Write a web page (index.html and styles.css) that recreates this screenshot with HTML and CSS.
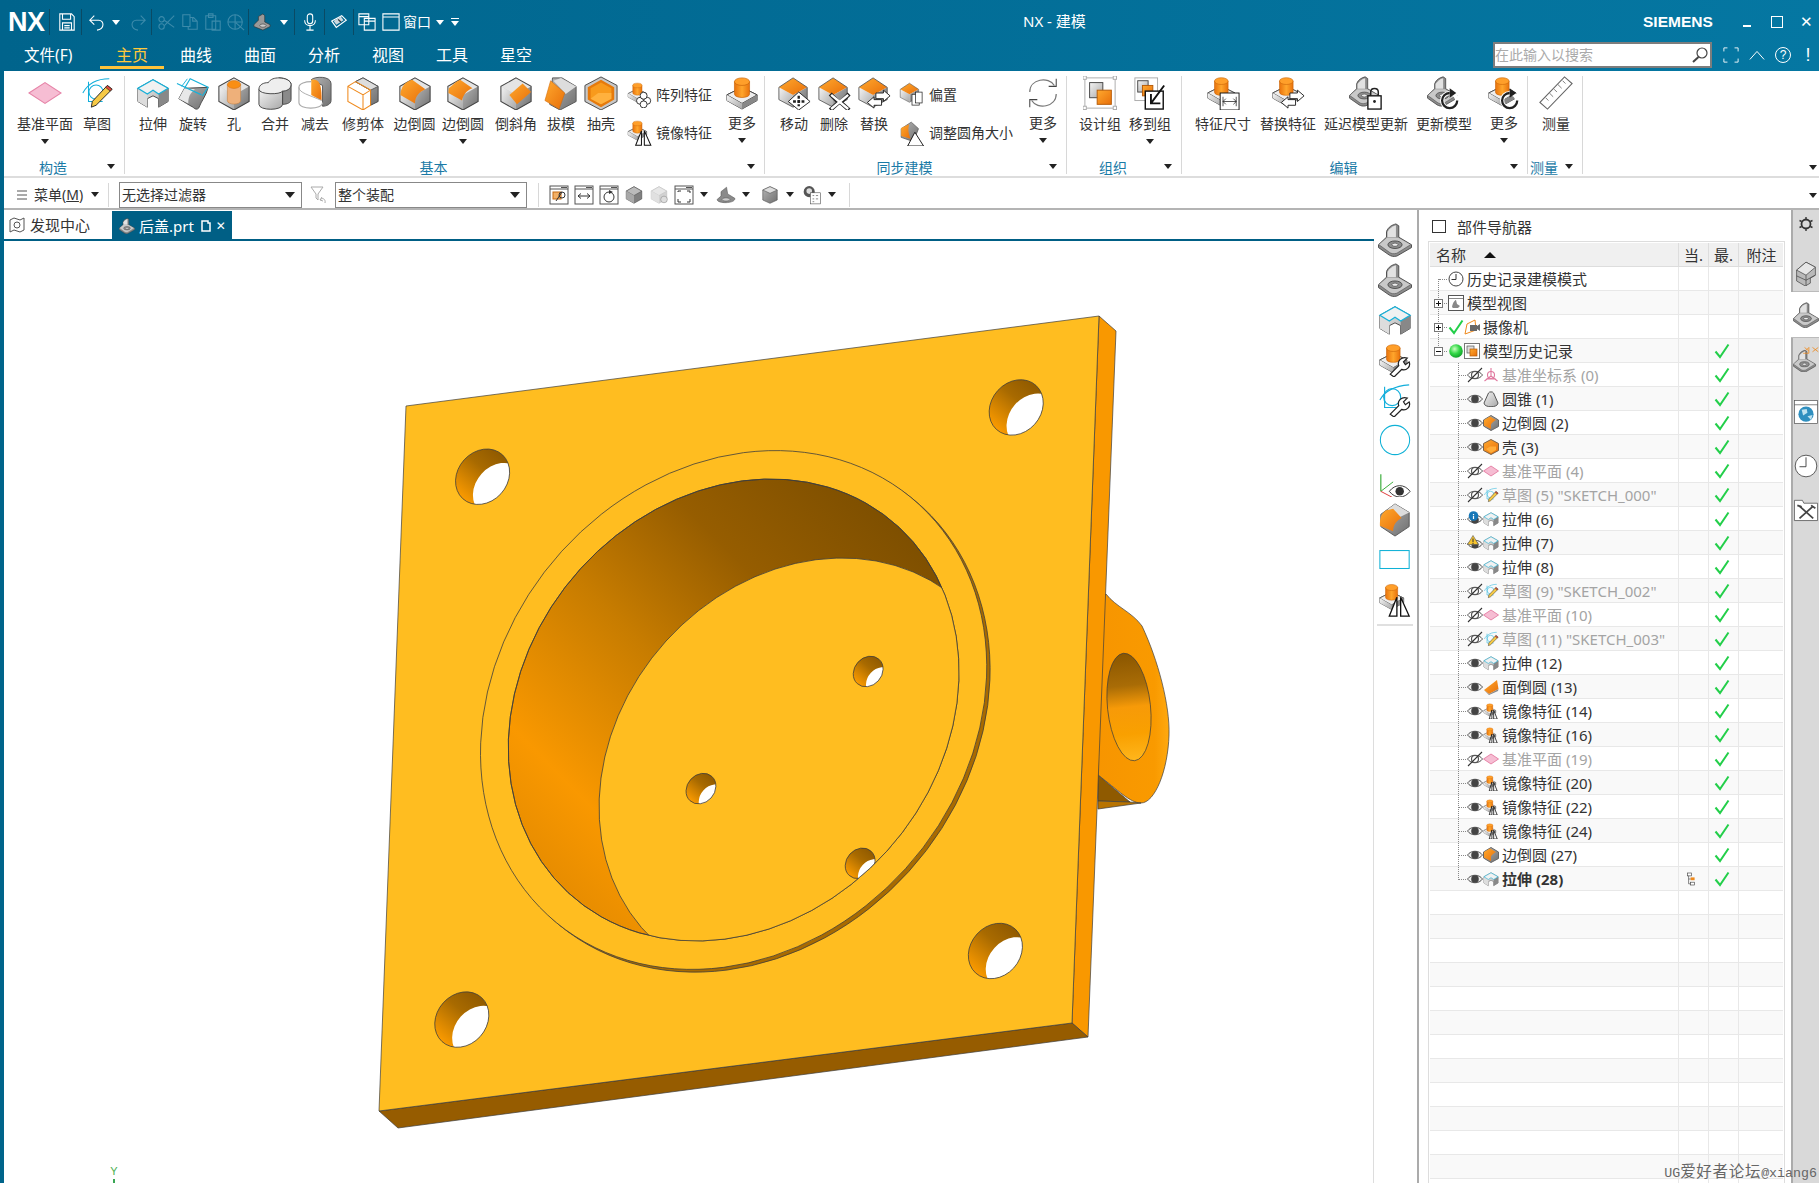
FILE: index.html
```html
<!DOCTYPE html>
<html lang="zh-CN">
<head>
<meta charset="utf-8">
<title>NX - 建模</title>
<link rel="stylesheet" href="styles.css">
</head>
<body>
<svg class="sprite" aria-hidden="true">
<defs>
<linearGradient id="gy" x1="0" y1="0" x2="1" y2="1"><stop offset="0" stop-color="#f4f4f4"/><stop offset="1" stop-color="#a8a8a8"/></linearGradient>
<linearGradient id="gd" x1="0" y1="0" x2="1" y2="1"><stop offset="0" stop-color="#b5b5b5"/><stop offset="1" stop-color="#6f6f6f"/></linearGradient>
<linearGradient id="og" x1="0" y1="0" x2="1" y2="1"><stop offset="0" stop-color="#ffa92e"/><stop offset="1" stop-color="#e86f0a"/></linearGradient>
<linearGradient id="oh" x1="0" y1="0" x2="1" y2="0"><stop offset="0" stop-color="#e8720c"/><stop offset=".5" stop-color="#ffa62c"/><stop offset="1" stop-color="#e8720c"/></linearGradient>
<radialGradient id="ball" cx=".4" cy=".35" r=".7"><stop offset="0" stop-color="#c9ffc0"/><stop offset=".5" stop-color="#35d848"/><stop offset="1" stop-color="#0b9a24"/></radialGradient>
<linearGradient id="hw" x1=".85" y1="0" x2=".1" y2=".8"><stop offset="0" stop-color="#8a5600"/><stop offset=".45" stop-color="#a86a00"/><stop offset="1" stop-color="#fa9a00"/></linearGradient>
<linearGradient id="bw" x1=".85" y1=".1" x2=".1" y2=".8"><stop offset="0" stop-color="#7c4e00"/><stop offset=".3" stop-color="#965d00"/><stop offset=".55" stop-color="#c77c00"/><stop offset=".85" stop-color="#f99800"/><stop offset="1" stop-color="#e88d00"/></linearGradient>
<linearGradient id="lughole" x1="0" y1="0" x2="0" y2="1"><stop offset="0" stop-color="#8a5600"/><stop offset=".3" stop-color="#a96c06"/><stop offset=".5" stop-color="#f79a08"/><stop offset=".75" stop-color="#f9a000"/><stop offset="1" stop-color="#ffb61c"/></linearGradient>
<linearGradient id="lug" x1="0" y1="0" x2="1" y2="0"><stop offset="0" stop-color="#f79500"/><stop offset=".8" stop-color="#f99a00"/><stop offset="1" stop-color="#ffa90f"/></linearGradient>
<clipPath id="c-big"><circle r="39"/></clipPath>
<clipPath id="c-small"><circle r="21.5"/></clipPath>
<clipPath id="c-bore"><circle cx="492" cy="494" r="325"/></clipPath>
<g id="hole-big"><circle r="39" fill="url(#hw)"/><circle cx="26" cy="23" r="39" fill="#fff" clip-path="url(#c-big)"/><circle r="39" class="edge"/></g>
<g id="hole-small"><circle r="21.5" fill="url(#hw)"/><circle cx="19" cy="18" r="21.5" fill="#fff" clip-path="url(#c-small)"/><circle r="21.5" class="edge"/></g>

<g id="b-cube"><path d="M18 2 34 11V27L18 36 2 27V11Z" fill="#ccc"/><path d="M18 2 34 11 18 20 2 11Z" fill="#e4e4e4"/><path d="M2 11 18 20V36L2 27Z" fill="url(#gy)"/><path d="M34 11 18 20V36L34 27Z" fill="url(#gd)"/><path d="M18 2 34 11V27L18 36 2 27V11Z" fill="none" stroke="#444" stroke-width="1.1"/></g>
<g id="b-cubeo"><path d="M2 12 17 20V33L2 25Z" fill="url(#gy)"/><path d="M32 12 17 20V33L32 25Z" fill="url(#gd)"/><path d="M17 2 32 12 17 20 2 12Z" fill="url(#og)"/><path d="M17 2 32 12V25L17 33 2 25V12Z" fill="none" stroke="#555" stroke-width=".9"/></g>
<g id="b-cyl"><path d="M2 20 18 12 34 20V26L18 35 2 26Z" fill="#ccc" stroke="#444"/><path d="M2 20 18 29 34 20 18 12Z" fill="#eee" stroke="#444"/><path d="M2 20 18 29V35L2 26Z" fill="url(#gy)"/><path d="M34 20 18 29V35L34 26Z" fill="#888"/><path d="M10 6V19C10 24 26 24 26 19V6Z" fill="url(#oh)" stroke="#c96308" stroke-width=".7"/><ellipse cx="18" cy="6" rx="8" ry="4" fill="#ff9f2a" stroke="#c96308" stroke-width=".7"/></g>
<g id="b-part"><path d="M.5 23 9 15V9C11 4 15 2 19 1L22 3V15L35.500 23V26L20 35C16 36 14 35 12 34L.5 26Z" fill="#8c8c8c" stroke="#4a4a4a"/><path d="M10 15V9.500C12 6 15 3.500 19 2.500V15Z" fill="#e2e2e2"/><path d="M1 23 9.500 15.500H21.500L34.500 23 20 32C16 33 14 32.500 12 31Z" fill="#c9c9c9"/><path d="M1 23 12 31C14 32.500 16 33 20 32L34.500 23" fill="none" stroke="#555" stroke-width=".7"/><ellipse cx="18" cy="23" rx="7.500" ry="4" fill="#8d8d8d" stroke="#444" stroke-width=".9"/><ellipse cx="18" cy="23" rx="3.200" ry="1.700" fill="#eee" stroke="#444" stroke-width=".7"/></g>
<g id="o-mv"><path d="M23 17 35 27 23 36 12 27Z" fill="#fff" stroke="#222"/><path d="M23 21V32M17 27H29" stroke="#222" stroke-width="2.5" stroke-dasharray="3 1.5"/></g>
<g id="o-x"><path d="M14 19 24 29M34 19 24 29M14 36 24 27M34 36 24 27" stroke="#222" stroke-width="4.4"/><path d="M15 20 33 35M33 20 15 35" stroke="#fff" stroke-width="2.6"/></g>
<g id="o-sw"><path d="M20 18H28V15L35 21 28 27V24H20ZM26 25H18V22L11 28 18 34V31H26Z" fill="#fff" stroke="#222" stroke-width="1"/></g>
<g id="o-tri"><path d="M12 35 20 15V35ZM24 35V15L33 35Z" fill="#fff" stroke="#111" stroke-width="1.4"/></g>
<g id="o-cir" fill="#fff" stroke="#222" stroke-width="1.2"><circle cx="18" cy="26" r="4.8"/><circle cx="28" cy="26" r="4.8"/><circle cx="23" cy="19" r="4.8"/><circle cx="23" cy="31" r="4.8"/></g>
<g id="o-doc"><rect x="18" y="17" width="10" height="15" fill="#fff" stroke="#222"/><rect x="23" y="14" width="9" height="15" fill="#fff" stroke="#222"/></g>
<g id="o-rot"><circle cx="24" cy="26" r="8" fill="none" stroke="#fff" stroke-width="4.5"/><path d="M24 18A8 8 0 1 0 32 26" fill="none" stroke="#222" stroke-width="2.4"/><path d="M24 13 31 18 24 23Z" fill="#222"/></g>
<g id="o-wr"><path d="M13 33 22 24C20 19 25 14 31 16L27 20 29 23 33 20C35 25 30 30 25 28L17 36Z" fill="#fff" stroke="#222" stroke-width="1.3"/></g>

<symbol id="plane" viewBox="0 0 36 36"><path d="M1 18 18 7 35 18 18 29Z" fill="#f6bdd3" stroke="#e684a8" stroke-width="1.2"/></symbol>
<g id="b-sk"><path d="M3 18C9 7 20 3 31 3M9 6 9 27H24" fill="none" stroke="#12aedb" stroke-width="1.1"/><circle cx="17" cy="17" r="7.5" fill="none" stroke="#12aedb" stroke-width="1.1"/><path d="M13 27 29 10 34 14 17 31 12 33Z" fill="#f6c945" stroke="#222" stroke-width="1"/><path d="M29 10 34 14 32 16 27 12Z" fill="#e1483e" stroke="#222" stroke-width=".7"/></g>
<symbol id="sketch" viewBox="0 0 36 36"><use href="#b-sk"/></symbol>
<g id="b-ext"><path d="M2 13 18 4 34 13V27L24 33V24L18 21 12 24V33L2 27Z" fill="url(#gy)" stroke="#444"/><path d="M24 24V33L34 27V13L24 19Z" fill="#888"/><path d="M12 24V33L2 27V13L12 19Z" fill="#ddd"/><path d="M2 13 18 4 34 13 24 19 18 15 12 19Z" fill="#f1f1f1"/><path d="M2 13 18 4 34 13 24 19 18 15 12 19Z" fill="none" stroke="#18b1d9" stroke-width="1.3"/></g>
<symbol id="ext" viewBox="0 0 36 36"><use href="#b-ext"/></symbol>
<symbol id="rev" viewBox="0 0 36 36"><path d="M3 24 9 13 34 12C32 21 27 26 24 34 22 36 20 35 18 33 14 31 8 27 3 24Z" fill="url(#gd)" stroke="#444"/><path d="M3 24 9 13 20 14C15 18 13 22 13 29Z" fill="#e8e8e8"/><path d="M1 8 27 20M9 13 15 3 34 12 28 21" fill="none" stroke="#18b1d9" stroke-width="1.200"/><path d="M6 11 12 3" stroke="#18b1d9"/></symbol>
<symbol id="hole" viewBox="0 0 36 36"><use href="#b-cube"/><path d="M11 9V26C11 31 25 31 25 26V9Z" fill="#eeb07a" stroke="#c6813f" stroke-width=".6"/><ellipse cx="18" cy="9" rx="7" ry="4.2" fill="#f98e14" stroke="#cf6a08" stroke-width=".5"/></symbol>
<symbol id="unite" viewBox="0 0 36 36"><path d="M22 2C29 2 35 5 35 9V25C35 28 31 30 26 30L26 14Z" fill="#8a8a8a" stroke="#444"/><path d="M1 14V30C1 37 26 37 26 30V14Z" fill="url(#gy)" stroke="#444"/><path d="M1 14C1 9 6 7 11 7 13 3 18 2 22 2 29 2 35 5 35 9 35 14 30 16 26 16 24 20 1 20 1 14Z" fill="#eee" stroke="#444"/></symbol>
<symbol id="subtr" viewBox="0 0 36 36"><path d="M14 4C18 0 35 0 35 8V26C35 30 30 32 26 32V10Z" fill="url(#gd)" stroke="#555"/><path d="M14 4C24 2 25 12 25 26L14 20Z" fill="url(#og)"/><path d="M1 12V28C1 36 26 36 26 28M1 12C1 8 8 6 14 6" fill="none" stroke="#aaa" stroke-width="1.2"/><path d="M1 12C1 18 12 20 25 26" fill="none" stroke="#aaa" stroke-width="1"/></symbol>
<symbol id="trim" viewBox="0 0 36 36"><path d="M18 2 34 11V27L26 31V15L10 6Z" fill="url(#gd)" stroke="#444"/><path d="M10 6 18 2 34 11 26 15Z" fill="#ddd" stroke="#444" stroke-width=".8"/><path d="M10 6 2 11V27L18 36 26 31V15ZM2 11 18 20V36M18 20 26 15" fill="none" stroke="#ef8a1d" stroke-width="1.1"/></symbol>
<symbol id="blend" viewBox="0 0 36 36"><use href="#b-cube"/><path d="M15 4C8 6 3 11 2.5 20L18 29C18 22 22 17 29 14Z" fill="url(#og)"/></symbol>
<symbol id="blend2" viewBox="0 0 36 36"><use href="#b-cube"/><path d="M11 6 3 13 2.5 18 17 26C18 20 22 15 28 13L15 4Z" fill="url(#og)"/></symbol>
<symbol id="chamf" viewBox="0 0 36 36"><use href="#b-cube"/><path d="M11 20 25 8 34 17 19 30Z" fill="url(#og)"/></symbol>
<symbol id="draft" viewBox="0 0 36 36"><path d="M9 2 19 2 34 11V27L17 36 6 30Z" fill="url(#gd)" stroke="#555"/><path d="M10 5 18 2 34 11 23 19Z" fill="#ddd"/><path d="M7 5 22 18 16 35 1 26Z" fill="url(#og)" stroke="#d46a08" stroke-width=".6"/></symbol>
<symbol id="shell" viewBox="0 0 36 36"><path d="M18 1 35 10V27L18 36 1 27V10Z" fill="#c7c7c7" stroke="#444"/><path d="M18 4 32 12V25L18 33 4 25V12Z" fill="#e67a0c"/><path d="M18 7 29 13V24L18 30 7 24V13Z" fill="#f89a1c"/><path d="M7 24 15 18H29V24L18 30Z" fill="#ffb13e"/></symbol>
<symbol id="pattern" viewBox="0 0 36 36"><g transform="scale(.8)"><use href="#b-cyl"/></g><use href="#o-cir"/></symbol>
<symbol id="mirror" viewBox="0 0 36 36"><g transform="scale(.8)"><use href="#b-cyl"/></g><use href="#o-tri"/></symbol>
<symbol id="more" viewBox="0 0 36 36"><use href="#b-cyl"/></symbol>
<symbol id="move" viewBox="0 0 36 36"><use href="#b-cubeo"/><use href="#o-mv"/></symbol>
<symbol id="del" viewBox="0 0 36 36"><use href="#b-cubeo"/><use href="#o-x"/></symbol>
<symbol id="swap" viewBox="0 0 36 36"><use href="#b-cubeo"/><use href="#o-sw"/></symbol>
<symbol id="offs" viewBox="0 0 36 36"><g transform="scale(.85)"><use href="#b-cubeo"/></g><use href="#o-doc"/></symbol>
<symbol id="resize" viewBox="0 0 36 36"><path d="M3 12 17 3 27 12 20 30 3 24Z" fill="url(#gd)" stroke="#555"/><path d="M3 11 14 6C12 13 13 19 16 26L3 22Z" fill="url(#og)"/><path d="M22 17 34 36H12Z" fill="#fff" stroke="#111" stroke-width="1.3"/></symbol>
<symbol id="sync" viewBox="0 0 36 36"><path d="M4 17C4 3 24 0 30 10M32 19C32 33 12 36 6 26" fill="none" stroke="#777" stroke-width="1.3"/><path d="M32 3V11H24M4 33V25H12" fill="none" stroke="#444" stroke-width="1.1"/></symbol>
<symbol id="grp" viewBox="0 0 36 36"><rect x="2" y="2" width="32" height="32" fill="none" stroke="#aaa"/><g fill="#fff" stroke="#aaa"><rect x="0" y="0" width="3.5" height="3.5"/><rect x="32" y="0" width="3.5" height="3.5"/><rect x="0" y="32" width="3.5" height="3.5"/><rect x="32" y="32" width="3.5" height="3.5"/></g><rect x="7" y="7" width="14" height="16" fill="url(#gy)" stroke="#444"/><rect x="15" y="15" width="15" height="15" fill="url(#og)" stroke="#b65a06"/></symbol>
<symbol id="grpto" viewBox="0 0 36 36"><rect x="2" y="2" width="24" height="24" fill="none" stroke="#aaa"/><rect x="5" y="5" width="11" height="12" fill="url(#gy)" stroke="#444"/><rect x="10" y="10" width="11" height="11" fill="url(#og)" stroke="#b65a06"/><rect x="13" y="16" width="19" height="19" fill="#fff" stroke="#111" stroke-width="1.5"/><path d="M33 10 19 29M19 19V29H29" fill="none" stroke="#111" stroke-width="2"/></symbol>
<symbol id="dimf" viewBox="0 0 36 36"><g transform="scale(.9)"><use href="#b-cyl"/></g><rect x="15" y="18" width="20" height="18" fill="#fff" stroke="#111"/><path d="M18 27H32M18 27 21 24M18 27 21 30M32 27 29 24M32 27 29 30M18 22V32M32 22V32" fill="none" stroke="#222" stroke-width=".8"/></symbol>
<symbol id="swapf" viewBox="0 0 36 36"><g transform="scale(.9)"><use href="#b-cyl"/></g><use href="#o-sw"/></symbol>
<symbol id="lock" viewBox="0 0 36 36"><g transform="scale(.9)"><use href="#b-part"/></g><rect x="20" y="21" width="14" height="14" fill="#fff" stroke="#111" stroke-width="1.4"/><path d="M23 21V17C23 12 31 12 31 17V21" fill="none" stroke="#222" stroke-width="1.6"/><circle cx="27" cy="27" r="1.5" fill="#222"/></symbol>
<symbol id="upd" viewBox="0 0 36 36"><g transform="scale(.9)"><use href="#b-part"/></g><use href="#o-rot"/></symbol>
<symbol id="updf" viewBox="0 0 36 36"><g transform="scale(.9)"><use href="#b-cyl"/></g><use href="#o-rot"/></symbol>
<symbol id="ruler" viewBox="0 0 36 36"><path d="M1 28 27 1 35 8 9 35Z" fill="#fff" stroke="#666" stroke-width="1.2"/><path d="M7 23 10 26M11 18 15 22M16 14 19 17M20 9 24 13M25 5 28 8" stroke="#777" stroke-width="1"/></symbol>
<symbol id="part" viewBox="0 0 36 36"><use href="#b-part"/></symbol>
<symbol id="part-wr" viewBox="0 0 36 36"><g transform="scale(.9)"><use href="#b-cyl"/></g><use href="#o-wr"/></symbol>
<symbol id="sk-wr" viewBox="0 0 36 36"><path d="M2 18C8 7 19 3 33 2M7 4V26H20" fill="none" stroke="#12aedb" stroke-width="1.2"/><circle cx="15" cy="15" r="9" fill="none" stroke="#12aedb" stroke-width="1.2"/><use href="#o-wr"/></symbol>
<symbol id="circle" viewBox="0 0 36 36"><circle cx="18" cy="18" r="15.5" fill="none" stroke="#0fb1d6" stroke-width="1.1"/></symbol>
<symbol id="axeye" viewBox="0 0 36 36"><path d="M3 12V30" stroke="#3a3" stroke-width="1.2"/><path d="M3 30 16 20" stroke="#3a3" stroke-width="1"/><path d="M3 30 22 40" stroke="#d33" stroke-width="1"/><path d="M12 30C18 22 28 22 34 30 28 38 18 38 12 30Z" fill="#fff" stroke="#333"/><circle cx="23" cy="30" r="4.5" fill="#333"/></symbol>
<symbol id="blendbig" viewBox="0 0 36 36"><path d="M18 1 33 10V25L18 35 3 25V12Z" fill="url(#gd)" stroke="#555"/><path d="M18 1 33 10 19 17 10 7Z" fill="#ddd"/><path d="M8 8C3 12 2 16 2 24L16 30C16 24 19 19 25 16L16 6Z" fill="url(#og)"/></symbol>
<symbol id="rectc" viewBox="0 0 36 36"><rect x="2" y="8" width="31" height="19" fill="none" stroke="#0fb1d6" stroke-width="1.1"/></symbol>
<symbol id="cube-grey" viewBox="0 0 36 36"><path d="M18 3 31 10V21L24 25V32L17 36 5 29V14Z" fill="#b9b9b9" stroke="#444"/><path d="M5 14 18 21 31 10 18 3Z" fill="#e6e6e6" stroke="#444"/><path d="M18 21V36M5 22 18 28 31 21" fill="none" stroke="#444"/></symbol>
<symbol id="part-sk" viewBox="0 0 36 36"><g transform="translate(0 5) scale(.88)"><use href="#b-part"/></g><path d="M14 10H22V2M16 2 22 7M27 2 35 8M35 2 27 8M18 6 22 2" fill="none" stroke="#ef8a1d" stroke-width="1.1"/></symbol>
<symbol id="globe" viewBox="0 0 36 36"><rect x="2" y="2" width="32" height="32" fill="#fff" stroke="#555"/><path d="M2 8H34" stroke="#555"/><circle cx="18" cy="21" r="10.5" fill="#2f8fbf"/><path d="M12 15 19 14 20 19 14 23ZM20 24 27 22 25 29Z" fill="#bfe2ef"/></symbol>
<symbol id="clock" viewBox="0 0 36 36"><circle cx="18" cy="18" r="15" fill="#fff" stroke="#444" stroke-width="1.2"/><path d="M18 6V19H9" fill="none" stroke="#333" stroke-width="1.2"/></symbol>
<symbol id="tools" viewBox="0 0 36 36"><path d="M2 6H13L15 10H34V34H2Z" fill="#fff" stroke="#444"/><path d="M9 14 28 31M28 14 9 31" stroke="#444" stroke-width="2.400"/><path d="M6 13 12 15M25 13 31 17" stroke="#444" stroke-width="2.400"/></symbol>
<symbol id="gear" viewBox="0 0 16 16"><circle cx="8" cy="8" r="4.5" fill="none" stroke="#333" stroke-width="1.8"/><path d="M8 1V3.5M8 12.5V15M1.500 4.500 3.700 5.500M14.500 4.500 12.300 5.500M1.500 11.500 3.700 10.500M14.500 11.500 12.300 10.500" stroke="#333" stroke-width="1.4"/></symbol>

<symbol id="t-clock" viewBox="0 0 16 16"><circle cx="8" cy="8" r="7" fill="#fff" stroke="#444"/><path d="M8 3V8.500H3.500" fill="none" stroke="#333"/></symbol>
<symbol id="t-view" viewBox="0 0 16 16"><rect x=".5" y=".5" width="15" height="15" fill="#fff" stroke="#555"/><path d="M1 3.500H15" stroke="#888"/><path d="M4 12C5 7 7 5 8 5L9 9 12 11 10 13H5Z" fill="#888"/></symbol>
<symbol id="t-cam" viewBox="0 0 16 16"><path d="M1 15 3 5 11 1 12 11Z" fill="#fff" stroke="#ef8a1d"/><rect x="6" y="6" width="7" height="6" fill="#666"/><path d="M13 7 16 5V12L13 10Z" fill="#666"/></symbol>
<symbol id="t-hist" viewBox="0 0 16 16"><rect x=".5" y=".5" width="15" height="15" fill="#fff" stroke="#777"/><rect x="3" y="3" width="7" height="7" fill="#ddd" stroke="#555" stroke-width=".7"/><rect x="6" y="6" width="7" height="7" fill="url(#og)" stroke="#b65a06" stroke-width=".7"/></symbol>
<symbol id="t-ball" viewBox="0 0 16 16"><circle cx="8" cy="8" r="6.800" fill="url(#ball)"/></symbol>
<symbol id="chk" viewBox="0 0 16 16"><path d="M1.500 8.500 6 14 14.500 1.500" fill="none" stroke="#23cf4a" stroke-width="2"/></symbol>
<symbol id="eye" viewBox="0 0 16 16"><path d="M.5 8C4 3 12 3 15.500 8 12 13 4 13 .5 8Z" fill="#eee" stroke="#555"/><circle cx="8" cy="8" r="3.800" fill="#444"/></symbol>
<symbol id="eye-off" viewBox="0 0 16 16"><path d="M.5 8C4 3 12 3 15.500 8 12 13 4 13 .5 8Z" fill="#fff" stroke="#555"/><circle cx="8" cy="8" r="3.500" fill="none" stroke="#555" stroke-width="1.2"/><path d="M1 15 15 1" stroke="#333" stroke-width="1.1"/></symbol>
<symbol id="eye-inf" viewBox="0 0 16 16"><path d="M.5 8C4 3 12 3 15.500 8 12 13 4 13 .5 8Z" fill="#eee" stroke="#555"/><circle cx="8" cy="9" r="3.800" fill="#444"/><circle cx="6.500" cy="5" r="4.800" fill="#1878b8"/><path d="M6.500 3V3.900M6.500 4.800V8" stroke="#fff" stroke-width="1.200"/></symbol>
<symbol id="eye-war" viewBox="0 0 16 16"><path d="M.5 9C4 4 12 4 15.500 9 12 14 4 14 .5 9Z" fill="#eee" stroke="#555"/><circle cx="8" cy="10" r="3.500" fill="#444"/><path d="M6 .5 11.500 9.500H.5Z" fill="#f7c52e" stroke="#555" stroke-width=".6"/><path d="M6 3.500V7M6 7.800V9" stroke="#333"/></symbol>
<symbol id="t-cone" viewBox="0 0 16 16"><path d="M5.500 2C6 .5 10 .5 10.500 2L15 12C15 17 1 17 1 12Z" fill="url(#gy)" stroke="#555"/></symbol>
<symbol id="t-blend" viewBox="0 0 16 16"><path d="M8 .5 15.500 5V11.500L8 15.500.5 11V5Z" fill="url(#gd)" stroke="#666"/><path d="M7 1.500 1 5V10.500L8 14V9.500C9 7.500 11 6 13 5Z" fill="url(#og)"/></symbol>
<symbol id="t-shell" viewBox="0 0 16 16"><path d="M8 .5 15.500 4.500V11.500L8 15.500.5 11.500V4.500Z" fill="url(#og)" stroke="#7a6248"/><path d="M3 10 7 7.500H13V11L8 14Z" fill="#ffad3a"/></symbol>
<symbol id="t-plane" viewBox="0 0 16 16"><path d="M.5 8 8 3 15.500 8 8 13Z" fill="#f6bdd3" stroke="#e684a8"/></symbol>
<symbol id="t-csys" viewBox="0 0 16 16"><g fill="none" stroke="#e0789f" stroke-width="1.100"><path d="M8 1V9M8 9 1.500 14M8 9 14.500 14M3 12H13"/><circle cx="8" cy="8" r="3.500"/></g></symbol>
<symbol id="t-sk" viewBox="0 0 36 36"><use href="#b-sk"/></symbol>
<symbol id="t-fbl" viewBox="0 0 16 16"><path d="M1 11 14 1 15.500 10 6 15Z" fill="url(#og)"/><path d="M1 11 6 15 15.500 10 15 12 6 16Z" fill="#888"/></symbol>
<symbol id="t-mir" viewBox="0 0 36 36"><g transform="scale(.85)"><use href="#b-cyl"/></g><path d="M14 36 20 16V36ZM24 36V16L32 36Z" fill="#fff" stroke="#111" stroke-width="1.800"/></symbol>
<symbol id="t-tree" viewBox="0 0 10 16"><g fill="#fff" stroke="#444" stroke-width=".8"><rect x=".5" y=".5" width="5" height="3.600"/><rect x="4.500" y="12" width="5" height="3.500"/></g><rect x="4.500" y="6" width="5" height="3.500" fill="#ef8a1d"/><path d="M2 4V14H4.500M2 8H4.500" fill="none" stroke="#444" stroke-width=".8"/></symbol>

<symbol id="q-save" viewBox="0 0 20 20"><path d="M2 1H15L18 4V19H2Z M5 1V7H14V1M5 11H15V19H5ZM7 14H13M7 16.500H13" fill="none" stroke="#fff" stroke-width="1.200"/></symbol>
<symbol id="q-undo" viewBox="0 0 20 20"><path d="M7 3 2 8 7 13M2 8H12C18 8 19 18 10 19" fill="none" stroke="#fff" stroke-width="1.200"/></symbol>
<symbol id="q-redo" viewBox="0 0 20 20"><path d="M13 3 18 8 13 13M18 8H8C2 8 1 18 10 19" fill="none" stroke="#3c8bab" stroke-width="1.200"/></symbol>
<symbol id="q-cut" viewBox="0 0 20 20"><g fill="none" stroke="#3c8bab" stroke-width="1.200"><circle cx="4" cy="7" r="3"/><circle cx="4" cy="15" r="3"/><path d="M7 8 18 16M7 14 18 3"/></g></symbol>
<symbol id="q-copy" viewBox="0 0 20 20"><g fill="none" stroke="#3c8bab" stroke-width="1.200"><path d="M2 2H10V15H2ZM10 5H14L18 9V18H8V15M13 5V9H18"/></g></symbol>
<symbol id="q-paste" viewBox="0 0 20 20"><g fill="none" stroke="#3c8bab" stroke-width="1.200"><path d="M2 3H13V18H2ZM5 1H10V5H5ZM9 9H18V19H9Z"/></g></symbol>
<symbol id="q-dup" viewBox="0 0 20 20"><g fill="none" stroke="#3c8bab" stroke-width="1.200"><circle cx="9" cy="10" r="8"/><path d="M1 10H17M9 2V18M10 11 19 19"/></g></symbol>
<symbol id="q-part" viewBox="0 0 20 20"><path d="M1 13 6 8V4L11 1 13 3V10L19 13V15L11 19 1 15Z" fill="#999" stroke="#333" stroke-width=".7"/><ellipse cx="11" cy="14" rx="3.500" ry="1.800" fill="#ccc" stroke="#333" stroke-width=".6"/></symbol>
<symbol id="q-mic" viewBox="0 0 20 20"><rect x="7" y="1" width="6" height="11" rx="3" fill="none" stroke="#fff" stroke-width="1.200"/><path d="M4 8C4 16 16 16 16 8M10 14V19M6 19H14" fill="none" stroke="#fff" stroke-width="1.200"/></symbol>
<symbol id="q-tool" viewBox="0 0 20 20"><path d="M2 9 13 3 18 8 7 16Z" fill="none" stroke="#fff" stroke-width="1.300"/><path d="M4 9 12 4 15 8 7 13Z" fill="#ccd8de"/><path d="M9 7 12 10" stroke="#333" stroke-width="1.300"/></symbol>
<symbol id="q-wins" viewBox="0 0 20 20"><g fill="none" stroke="#fff" stroke-width="1.200"><path d="M1 1H12V13H1ZM1 4H12M7 6H19V19H7ZM7 9H19"/></g></symbol>
<symbol id="q-win" viewBox="0 0 20 20"><path d="M1 1H19V19H1ZM1 4.500H19" fill="none" stroke="#fff" stroke-width="1.200"/></symbol>

<g id="tb-frame"><rect x="1" y="1" width="18" height="18" fill="#fff" stroke="#555"/><path d="M1 4H19M12 2.500H18" stroke="#555" fill="none"/></g>
<symbol id="tb-fit" viewBox="0 0 20 20"><use href="#tb-frame"/><rect x="4" y="7" width="8" height="7" fill="#f3b066" stroke="#c56a12"/><path d="M13 7 7 16" stroke="#333"/><circle cx="13" cy="10" r="3" fill="none" stroke="#333"/></symbol>
<symbol id="tb-pan" viewBox="0 0 20 20"><use href="#tb-frame"/><path d="M4 11H16M4 11 7 8.500M4 11 7 13.500M16 11 13 8.500M16 11 13 13.500" fill="none" stroke="#333"/></symbol>
<symbol id="tb-rot" viewBox="0 0 20 20"><use href="#tb-frame"/><circle cx="10" cy="12" r="5" fill="none" stroke="#333"/><path d="M10 5 14 7 10 9Z" fill="#333"/></symbol>
<g id="tb-cube-g"><path d="M18 3 32 11V25L18 33 4 25V11Z" fill="#808080" stroke="#444"/><path d="M18 3 32 11 18 19 4 11Z" fill="#bbb" stroke="#555"/><path d="M4 11 18 19V33L4 25Z" fill="#a8a8a8"/></g>
<symbol id="tb-cube" viewBox="0 0 36 36"><use href="#tb-cube-g"/></symbol>
<symbol id="tb-cube2" viewBox="0 0 36 36"><g opacity=".35"><use href="#tb-cube-g"/></g><circle cx="27" cy="26" r="6" fill="#ddd" stroke="#888"/></symbol>
<symbol id="tb-full" viewBox="0 0 20 20"><use href="#tb-frame"/><path d="M4 7V6H7M13 6H16V8M4 14V17H7M16 14V17H13" fill="none" stroke="#333"/></symbol>
<symbol id="tb-hole" viewBox="0 0 36 36"><path d="M2 26 9 20V12L19 4 21 16 34 24C35 34 2 34 2 26Z" fill="#8a8a8a" stroke="#555"/><ellipse cx="18" cy="26" rx="7" ry="3" fill="#ccc" stroke="#555"/></symbol>
<symbol id="tb-cyl" viewBox="0 0 36 36"><path d="M5 9 18 3 31 9V27L18 33 5 27Z" fill="url(#gd)" stroke="#444"/><path d="M5 9 18 3 31 9 18 15Z" fill="#ddd" stroke="#555"/></symbol>
<symbol id="tb-lay" viewBox="0 0 36 36"><circle cx="13" cy="12" r="10" fill="#555"/><circle cx="13" cy="11" r="5" fill="#ddd"/><rect x="15" y="14" width="18" height="20" fill="#fff" stroke="#444"/><path d="M19 19H22M25 19H29M19 25H22M25 25H29M19 30H22" stroke="#333"/></symbol>
</defs>
</svg>

<header class="titlebar">
  <div class="topline">
    <span class="nx">NX</span>
    <i class="qsep qsep-first"></i>
    <span class="slot s31 pad3"><svg class="q"><use href="#q-save"/></svg></span>
    <i class="qsep"></i>
    <span class="slot s25 pad5"><svg class="q"><use href="#q-undo"/></svg></span>
    <span class="slot s18"><b class="tri tri-w"></b></span>
    <span class="slot s26"><svg class="q"><use href="#q-redo"/></svg></span>
    <i class="qsep"></i>
    <span class="slot s23 first-dim"><svg class="q"><use href="#q-cut"/></svg></span>
    <span class="slot s23"><svg class="q"><use href="#q-copy"/></svg></span>
    <span class="slot s23"><svg class="q"><use href="#q-paste"/></svg></span>
    <span class="slot s23 last-dim"><svg class="q"><use href="#q-dup"/></svg></span>
    <i class="qsep"></i>
    <span class="slot s25"><svg class="q"><use href="#q-part"/></svg></span>
    <span class="slot s20"><b class="tri tri-w"></b></span>
    <i class="qsep"></i>
    <span class="slot s29"><svg class="q"><use href="#q-mic"/></svg></span>
    <i class="qsep"></i>
    <span class="slot s28"><svg class="q"><use href="#q-tool"/></svg></span>
    <i class="qsep"></i>
    <span class="slot s26"><svg class="q"><use href="#q-wins"/></svg></span>
    <span class="slot s22"><svg class="q"><use href="#q-win"/></svg></span>
    <span class="wintext">窗口</span>
    <span class="slot s18"><b class="tri tri-w"></b></span>
    <span class="slot s12 dropline"><b class="tri tri-w"></b></span>
    <span class="apptitle">NX - 建模</span>
    <span class="siemens">SIEMENS</span>
    <span class="winbtn w-min"></span>
    <span class="winbtn w-max"></span>
    <span class="winbtn w-close">✕</span>
  </div>
  <nav class="tabline">
    <span class="filetab">文件(F)</span>
    <span class="rtab active">主页</span>
    <span class="rtab">曲线</span>
    <span class="rtab">曲面</span>
    <span class="rtab">分析</span>
    <span class="rtab">视图</span>
    <span class="rtab">工具</span>
    <span class="rtab">星空</span>
    <div class="search"><span>在此输入以搜索</span><svg class="mag" viewBox="0 0 16 16"><circle cx="10" cy="6" r="5" fill="none" stroke="#444" stroke-width="1.200"/><path d="M6.500 10 1 15" stroke="#444" stroke-width="2"/></svg></div>
    <svg class="hbtn" viewBox="0 0 18 18"><path d="M1 5V1H5M13 1H17V5M1 13V17H5M13 17H17V13" fill="none" stroke="#fff"/></svg>
    <svg class="hbtn" viewBox="0 0 18 18"><path d="M1 14 9 5 17 14" fill="none" stroke="#fff" stroke-width="1.100"/></svg>
    <span class="hq">?</span>
    <span class="hex">!</span>
  </nav>
</header>

<div class="app">
  <section class="ribbon">
    <div class="group g1">
      <div class="gbody">
        <div class="item w60"><svg class="ic"><use href="#plane"/></svg><span>基准平面</span><b class="tri"></b></div>
        <div class="item w44"><svg class="ic"><use href="#sketch"/></svg><span>草图</span></div>
      </div>
      <div class="gfoot"><span>构造</span><b class="tri"></b></div>
    </div>
    <div class="group g2">
      <div class="gbody">
        <div class="item w40"><svg class="ic"><use href="#ext"/></svg><span>拉伸</span></div>
        <div class="item w40"><svg class="ic"><use href="#rev"/></svg><span>旋转</span></div>
        <div class="item w42"><svg class="ic"><use href="#hole"/></svg><span>孔</span></div>
        <div class="item w40"><svg class="ic"><use href="#unite"/></svg><span>合并</span></div>
        <div class="item w40"><svg class="ic"><use href="#subtr"/></svg><span>减去</span></div>
        <div class="item w56"><svg class="ic"><use href="#trim"/></svg><span>修剪体</span><b class="tri"></b></div>
        <div class="item w47"><svg class="ic"><use href="#blend"/></svg><span>边倒圆</span></div>
        <div class="item w50"><svg class="ic"><use href="#blend2"/></svg><span>边倒圆</span><b class="tri"></b></div>
        <div class="item w56"><svg class="ic"><use href="#chamf"/></svg><span>倒斜角</span></div>
        <div class="item w34"><svg class="ic"><use href="#draft"/></svg><span>拔模</span></div>
        <div class="item w46"><svg class="ic"><use href="#shell"/></svg><span>抽壳</span></div>
        <div class="stack s98">
          <div class="srow"><svg class="ics"><use href="#pattern"/></svg><span>阵列特征</span></div>
          <div class="srow"><svg class="ics"><use href="#mirror"/></svg><span>镜像特征</span></div>
        </div>
        <div class="item w40"><svg class="ic"><use href="#more"/></svg><span class="up">更多</span><b class="tri"></b></div>
      </div>
      <div class="gfoot"><span>基本</span><b class="tri"></b></div>
    </div>
    <div class="group g3">
      <div class="gbody">
        <div class="item w40"><svg class="ic"><use href="#move"/></svg><span>移动</span></div>
        <div class="item w40"><svg class="ic"><use href="#del"/></svg><span>删除</span></div>
        <div class="item w40"><svg class="ic"><use href="#swap"/></svg><span>替换</span></div>
        <div class="stack s129">
          <div class="srow"><svg class="ics"><use href="#offs"/></svg><span>偏置</span></div>
          <div class="srow"><svg class="ics"><use href="#resize"/></svg><span>调整圆角大小</span></div>
        </div>
        <div class="item w40"><svg class="ic"><use href="#sync"/></svg><span class="up">更多</span><b class="tri"></b></div>
      </div>
      <div class="gfoot"><span>同步建模</span><b class="tri"></b></div>
    </div>
    <div class="group g4">
      <div class="gbody">
        <div class="item w56"><svg class="ic"><use href="#grp"/></svg><span>设计组</span></div>
        <div class="item w44"><svg class="ic"><use href="#grpto"/></svg><span>移到组</span><b class="tri"></b></div>
      </div>
      <div class="gfoot"><span>组织</span><b class="tri"></b></div>
    </div>
    <div class="group g5">
      <div class="gbody">
        <div class="item w68"><svg class="ic"><use href="#dimf"/></svg><span>特征尺寸</span></div>
        <div class="item w62"><svg class="ic"><use href="#swapf"/></svg><span>替换特征</span></div>
        <div class="item w94"><svg class="ic"><use href="#lock"/></svg><span>延迟模型更新</span></div>
        <div class="item w62"><svg class="ic"><use href="#upd"/></svg><span>更新模型</span></div>
        <div class="item w44 gap7"><svg class="ic"><use href="#updf"/></svg><span class="up">更多</span><b class="tri"></b></div>
      </div>
      <div class="gfoot"><span>编辑</span><b class="tri"></b></div>
    </div>
    <div class="group g6">
      <div class="gbody">
        <div class="item w55"><svg class="ic"><use href="#ruler"/></svg><span>测量</span></div>
      </div>
      <div class="gfoot"><span>测量</span><b class="tri"></b></div>
    </div>
    <b class="tri ribbon-end"></b>
  </section>

  <section class="toolbar">
    <svg class="burger" viewBox="0 0 10 10"><path d="M0 1H10M0 5H10M0 9H10" stroke="#555"/></svg>
    <span class="menutxt">菜单(<u>M</u>)</span>
    <b class="tri arrow-menu"></b>
    <i class="tsep sep-a"></i>
    <div class="combo c1"><span>无选择过滤器</span><b class="tri tri-l"></b></div>
    <span class="fslot"><svg class="fic" viewBox="0 0 20 20"><path d="M2 2H14L9 9V15L7 13V9Z" fill="#fff" stroke="#aaa"/><path d="M11 15C13 12 17 14 16 18M11 15 13 12M11 15 14 16" fill="none" stroke="#aaa"/></svg></span>
    <div class="combo c2"><span>整个装配</span><b class="tri tri-l"></b></div>
    <i class="tsep sep-b"></i>
    <svg class="tbi first"><use href="#tb-fit"/></svg>
    <svg class="tbi"><use href="#tb-pan"/></svg>
    <svg class="tbi"><use href="#tb-rot"/></svg>
    <svg class="tbi"><use href="#tb-cube"/></svg>
    <svg class="tbi"><use href="#tb-cube2"/></svg>
    <svg class="tbi"><use href="#tb-full"/></svg>
    <b class="tri tba"></b>
    <svg class="tbi near"><use href="#tb-hole"/></svg>
    <b class="tri tba"></b>
    <svg class="tbi far"><use href="#tb-cyl"/></svg>
    <b class="tri tba"></b>
    <svg class="tbi near"><use href="#tb-lay"/></svg>
    <b class="tri tba"></b>
    <i class="tsep sep-c"></i>
    <b class="tri toolbar-end"></b>
  </section>

  <main class="work">
    <div class="viewport">
      <div class="doc-tabs">
        <div class="dtab"><svg class="dic" viewBox="0 0 16 16"><path d="M1 3 5 1 11 3 15 1V13L11 15 5 13 1 15Z" fill="#fff" stroke="#555"/><circle cx="8" cy="8" r="3" fill="none" stroke="#555"/></svg><span>发现中心</span></div>
        <div class="dtab on"><svg class="dic" viewBox="0 0 36 36"><use href="#b-part"/></svg><span>后盖.prt</span><svg class="dmini" viewBox="0 0 10 12"><path d="M1 1H7V3H9V11H1Z" fill="none" stroke="#fff" stroke-width="1.500"/></svg><span class="dx">✕</span></div>
      </div>
      <div class="canvas">
        <svg class="model" viewBox="4 241 1369 942">
          <path d="M1106 594C1116 607 1132 612 1142 626 1158 660 1170 705 1169 735 1168 770 1155 803 1141 803 1130 803 1118 790 1098 775V600Z" fill="url(#lug)" class="edge-s"/>
          <path d="M1098 775 1130 802 1098 801Z" fill="#8f5a00" class="edge-s"/>
          <path d="M1098 801 1130 802 1141 803 1098 809Z" fill="#b87300" class="edge-s"/>
          <ellipse cx="1129" cy="707" rx="21.500" ry="54" transform="rotate(-6 1129 707)" fill="url(#lughole)" class="edge-s"/>
          <polygon points="1099,316 1116,331 1088,1037 1072,1023" fill="#f99800" class="edge-s"/>
          <polygon points="379,1111 1072,1023 1088,1037 398,1128" fill="#965c00" class="edge-s"/>
          <polygon points="406,406 1099,316 1072,1023 379,1111" fill="#ffbd20" class="edge-s"/>
          <g transform="matrix(.693 -.09 -.027 .705 406 406)">
            <circle cx="497" cy="498.500" r="365" fill="#a86a00" class="edge"/>
            <circle cx="492" cy="494" r="365" fill="#ffbd20" class="edge"/>
            <circle cx="492" cy="494" r="325" fill="url(#bw)" class="edge"/>
            <g clip-path="url(#c-bore)">
              <circle cx="603" cy="596" r="301" fill="#ffbd20" class="edge"/>
              <use href="#hole-small" x="685" y="464"/>
              <use href="#hole-small" x="449" y="600"/>
              <use href="#hole-small" x="684" y="736"/>
            </g>
            <circle cx="492" cy="494" r="325" fill="none" class="edge"/>
            <use href="#hole-big" x="115" y="115"/>
            <use href="#hole-big" x="885" y="115"/>
            <use href="#hole-big" x="115" y="885"/>
            <use href="#hole-big" x="885" y="886"/>
          </g>
          <text x="114" y="1175" class="axis">Y</text>
          <path d="M114 1179V1183" stroke="#3aa655" stroke-width="2"/>
        </svg>
      </div>
    </div>

    <aside class="vtools">
      <svg class="ic"><use href="#part"/></svg>
      <svg class="ic"><use href="#part"/></svg>
      <svg class="ic"><use href="#ext"/></svg>
      <svg class="ic"><use href="#part-wr"/></svg>
      <svg class="ic"><use href="#sk-wr"/></svg>
      <svg class="ic"><use href="#circle"/></svg>
      <svg class="ic"><use href="#axeye"/></svg>
      <svg class="ic"><use href="#blendbig"/></svg>
      <svg class="ic"><use href="#rectc"/></svg>
      <svg class="ic"><use href="#mirror"/></svg>
      <i class="vline"></i>
    </aside>

    <section class="navpanel">
      <div class="navtitle"><i class="nbox"></i><span>部件导航器</span></div>
      <div class="table">
        <div class="thead">
          <div class="th th-name"><span>名称</span><b class="tri-up"></b></div>
          <div class="th">当.</div>
          <div class="th">最.</div>
          <div class="th">附注</div>
        </div>
        <div class="tbody">
          <div class="row root"><div class="c0"><i class="tg"></i><svg class="t"><use href="#t-clock"/></svg><span class="lbl">历史记录建模模式</span></div><div class="c"></div><div class="c"></div><div class="c"></div></div>
          <div class="row root"><div class="c0"><i class="tg plus"></i><svg class="t"><use href="#t-view"/></svg><span class="lbl">模型视图</span></div><div class="c"></div><div class="c"></div><div class="c"></div></div>
          <div class="row root"><div class="c0"><i class="tg plus"></i><svg class="t"><use href="#chk"/></svg><svg class="t"><use href="#t-cam"/></svg><span class="lbl">摄像机</span></div><div class="c"></div><div class="c"></div><div class="c"></div></div>
          <div class="row root"><div class="c0"><i class="tg minus"></i><svg class="t"><use href="#t-ball"/></svg><svg class="t"><use href="#t-hist"/></svg><span class="lbl">模型历史记录</span></div><div class="c"></div><div class="c ok"><svg class="t"><use href="#chk"/></svg></div><div class="c"></div></div>
          <div class="row kid off"><div class="c0"><svg class="t"><use href="#eye-off"/></svg><svg class="t"><use href="#t-csys"/></svg><span class="lbl">基准坐标系 (0)</span></div><div class="c"></div><div class="c ok"><svg class="t"><use href="#chk"/></svg></div><div class="c"></div></div>
          <div class="row kid"><div class="c0"><svg class="t"><use href="#eye"/></svg><svg class="t"><use href="#t-cone"/></svg><span class="lbl">圆锥 (1)</span></div><div class="c"></div><div class="c ok"><svg class="t"><use href="#chk"/></svg></div><div class="c"></div></div>
          <div class="row kid"><div class="c0"><svg class="t"><use href="#eye"/></svg><svg class="t"><use href="#t-blend"/></svg><span class="lbl">边倒圆 (2)</span></div><div class="c"></div><div class="c ok"><svg class="t"><use href="#chk"/></svg></div><div class="c"></div></div>
          <div class="row kid"><div class="c0"><svg class="t"><use href="#eye"/></svg><svg class="t"><use href="#t-shell"/></svg><span class="lbl">壳 (3)</span></div><div class="c"></div><div class="c ok"><svg class="t"><use href="#chk"/></svg></div><div class="c"></div></div>
          <div class="row kid off"><div class="c0"><svg class="t"><use href="#eye-off"/></svg><svg class="t"><use href="#t-plane"/></svg><span class="lbl">基准平面 (4)</span></div><div class="c"></div><div class="c ok"><svg class="t"><use href="#chk"/></svg></div><div class="c"></div></div>
          <div class="row kid off"><div class="c0"><svg class="t"><use href="#eye-off"/></svg><svg class="t"><use href="#t-sk"/></svg><span class="lbl">草图 (5) "SKETCH_000"</span></div><div class="c"></div><div class="c ok"><svg class="t"><use href="#chk"/></svg></div><div class="c"></div></div>
          <div class="row kid"><div class="c0"><svg class="t"><use href="#eye-inf"/></svg><svg class="t"><use href="#ext"/></svg><span class="lbl">拉伸 (6)</span></div><div class="c"></div><div class="c ok"><svg class="t"><use href="#chk"/></svg></div><div class="c"></div></div>
          <div class="row kid"><div class="c0"><svg class="t"><use href="#eye-war"/></svg><svg class="t"><use href="#ext"/></svg><span class="lbl">拉伸 (7)</span></div><div class="c"></div><div class="c ok"><svg class="t"><use href="#chk"/></svg></div><div class="c"></div></div>
          <div class="row kid"><div class="c0"><svg class="t"><use href="#eye"/></svg><svg class="t"><use href="#ext"/></svg><span class="lbl">拉伸 (8)</span></div><div class="c"></div><div class="c ok"><svg class="t"><use href="#chk"/></svg></div><div class="c"></div></div>
          <div class="row kid off"><div class="c0"><svg class="t"><use href="#eye-off"/></svg><svg class="t"><use href="#t-sk"/></svg><span class="lbl">草图 (9) "SKETCH_002"</span></div><div class="c"></div><div class="c ok"><svg class="t"><use href="#chk"/></svg></div><div class="c"></div></div>
          <div class="row kid off"><div class="c0"><svg class="t"><use href="#eye-off"/></svg><svg class="t"><use href="#t-plane"/></svg><span class="lbl">基准平面 (10)</span></div><div class="c"></div><div class="c ok"><svg class="t"><use href="#chk"/></svg></div><div class="c"></div></div>
          <div class="row kid off"><div class="c0"><svg class="t"><use href="#eye-off"/></svg><svg class="t"><use href="#t-sk"/></svg><span class="lbl">草图 (11) "SKETCH_003"</span></div><div class="c"></div><div class="c ok"><svg class="t"><use href="#chk"/></svg></div><div class="c"></div></div>
          <div class="row kid"><div class="c0"><svg class="t"><use href="#eye"/></svg><svg class="t"><use href="#ext"/></svg><span class="lbl">拉伸 (12)</span></div><div class="c"></div><div class="c ok"><svg class="t"><use href="#chk"/></svg></div><div class="c"></div></div>
          <div class="row kid"><div class="c0"><svg class="t"><use href="#eye"/></svg><svg class="t"><use href="#t-fbl"/></svg><span class="lbl">面倒圆 (13)</span></div><div class="c"></div><div class="c ok"><svg class="t"><use href="#chk"/></svg></div><div class="c"></div></div>
          <div class="row kid"><div class="c0"><svg class="t"><use href="#eye"/></svg><svg class="t"><use href="#t-mir"/></svg><span class="lbl">镜像特征 (14)</span></div><div class="c"></div><div class="c ok"><svg class="t"><use href="#chk"/></svg></div><div class="c"></div></div>
          <div class="row kid"><div class="c0"><svg class="t"><use href="#eye"/></svg><svg class="t"><use href="#t-mir"/></svg><span class="lbl">镜像特征 (16)</span></div><div class="c"></div><div class="c ok"><svg class="t"><use href="#chk"/></svg></div><div class="c"></div></div>
          <div class="row kid off"><div class="c0"><svg class="t"><use href="#eye-off"/></svg><svg class="t"><use href="#t-plane"/></svg><span class="lbl">基准平面 (19)</span></div><div class="c"></div><div class="c ok"><svg class="t"><use href="#chk"/></svg></div><div class="c"></div></div>
          <div class="row kid"><div class="c0"><svg class="t"><use href="#eye"/></svg><svg class="t"><use href="#t-mir"/></svg><span class="lbl">镜像特征 (20)</span></div><div class="c"></div><div class="c ok"><svg class="t"><use href="#chk"/></svg></div><div class="c"></div></div>
          <div class="row kid"><div class="c0"><svg class="t"><use href="#eye"/></svg><svg class="t"><use href="#t-mir"/></svg><span class="lbl">镜像特征 (22)</span></div><div class="c"></div><div class="c ok"><svg class="t"><use href="#chk"/></svg></div><div class="c"></div></div>
          <div class="row kid"><div class="c0"><svg class="t"><use href="#eye"/></svg><svg class="t"><use href="#t-mir"/></svg><span class="lbl">镜像特征 (24)</span></div><div class="c"></div><div class="c ok"><svg class="t"><use href="#chk"/></svg></div><div class="c"></div></div>
          <div class="row kid"><div class="c0"><svg class="t"><use href="#eye"/></svg><svg class="t"><use href="#t-blend"/></svg><span class="lbl">边倒圆 (27)</span></div><div class="c"></div><div class="c ok"><svg class="t"><use href="#chk"/></svg></div><div class="c"></div></div>
          <div class="row kid last"><div class="c0"><svg class="t"><use href="#eye"/></svg><svg class="t"><use href="#ext"/></svg><span class="lbl strong">拉伸 (28)</span></div><div class="c ok"><svg class="tt"><use href="#t-tree"/></svg></div><div class="c ok"><svg class="t"><use href="#chk"/></svg></div><div class="c"></div></div>
          <div class="row"><div class="c0"></div><div class="c"></div><div class="c"></div><div class="c"></div></div>
          <div class="row"><div class="c0"></div><div class="c"></div><div class="c"></div><div class="c"></div></div>
          <div class="row"><div class="c0"></div><div class="c"></div><div class="c"></div><div class="c"></div></div>
          <div class="row"><div class="c0"></div><div class="c"></div><div class="c"></div><div class="c"></div></div>
          <div class="row"><div class="c0"></div><div class="c"></div><div class="c"></div><div class="c"></div></div>
          <div class="row"><div class="c0"></div><div class="c"></div><div class="c"></div><div class="c"></div></div>
          <div class="row"><div class="c0"></div><div class="c"></div><div class="c"></div><div class="c"></div></div>
          <div class="row"><div class="c0"></div><div class="c"></div><div class="c"></div><div class="c"></div></div>
          <div class="row"><div class="c0"></div><div class="c"></div><div class="c"></div><div class="c"></div></div>
          <div class="row"><div class="c0"></div><div class="c"></div><div class="c"></div><div class="c"></div></div>
          <div class="row"><div class="c0"></div><div class="c"></div><div class="c"></div><div class="c"></div></div>
          <div class="row"><div class="c0"></div><div class="c"></div><div class="c"></div><div class="c"></div></div>
          <div class="row"><div class="c0"></div><div class="c"></div><div class="c"></div><div class="c"></div></div>
        </div>
      </div>
    </section>

    <aside class="rail">
      <div class="rail-top"><svg class="gear"><use href="#gear"/></svg><svg class="ri"><use href="#cube-grey"/></svg></div>
      <div class="rail-active"><svg class="ri"><use href="#part"/></svg></div>
      <div class="rail-rest">
        <svg class="ri"><use href="#part-sk"/></svg>
        <svg class="ri"><use href="#globe"/></svg>
        <svg class="ri"><use href="#clock"/></svg>
        <svg class="ri"><use href="#tools"/></svg>
      </div>
    </aside>
    <div class="watermark"><span class="wm-l">UG</span>爱好者论坛<span class="wm-l">@xiang6</span></div>
  </main>
</div>
</body>
</html>
```
FILE: styles.css
```css
* { box-sizing: border-box; }
html, body { margin: 0; height: 100%; overflow: hidden; }
body {
  width: 1819px; height: 1183px; background: #00648a; position: relative;
  font-family: "Noto Sans", "Noto Sans CJK SC", sans-serif; font-size: 14px; color: #333;
}
.sprite { position: absolute; width: 0; height: 0; }
svg { display: block; flex: none; }
.edge { stroke: #3d3d3d; stroke-width: .8; vector-effect: non-scaling-stroke; }
#hole-big .edge, #hole-small .edge { fill: none; }
.edge-s { stroke: #3d3d3d; stroke-width: .7; }
.axis { font: 11px "Liberation Sans", sans-serif; fill: #4caf50; text-anchor: middle; }

.tri { display: block; width: 0; height: 0; border-left: 4px solid transparent; border-right: 4px solid transparent; border-top: 5px solid #222; flex: none; }
.tri-w { border-top-color: #fff; }

/* title bar */
.titlebar { height: 71px; background: linear-gradient(90deg, #00648c, #0577a2); color: #fff; }
.topline { height: 44px; display: flex; align-items: center; padding-left: 8px; }
.nx { width: 35px; font: bold 27px/44px "Liberation Sans", sans-serif; letter-spacing: -.5px; }
.qsep { width: 1px; height: 26px; background: #0a4a64; flex: none; }
.qsep-first { margin-left: 6px; }
.slot { display: flex; justify-content: center; align-items: center; height: 24px; flex: none; }
.s12 { width: 12px; } .s18 { width: 18px; } .s20 { width: 20px; } .s22 { width: 22px; } .s23 { width: 23px; }
.s25 { width: 25px; } .s26 { width: 26px; } .s28 { width: 28px; } .s29 { width: 29px; } .s31 { width: 31px; }
.pad3 { padding-left: 3px; } .pad5 { padding-left: 5px; }
.first-dim { margin-left: 3px; } .last-dim { margin-right: 1px; }
.q { width: 18px; height: 18px; }
.wintext { width: 28px; margin-left: 1px; font-size: 14px; line-height: 20px; white-space: nowrap; }
.dropline { flex-direction: column; gap: 2px; }
.dropline::before { content: ""; width: 8px; height: 1px; background: #fff; }
.apptitle { position: absolute; left: 1023px; top: 10px; line-height: 22px; font-size: 15px; white-space: nowrap; }
.siemens { margin-left: auto; width: 70px; padding-left: 1px; font: bold 15.5px/20px "Liberation Sans", sans-serif; }
.winbtn { display: block; flex: none; }
.w-min { width: 8px; height: 2px; background: #fff; margin: 8px 0 0 31px; }
.w-max { width: 12px; height: 12px; border: 1.5px solid #fff; margin-left: 20px; }
.w-close { width: 14px; margin: 0 5px 0 17px; font: 15px/14px "DejaVu Sans", sans-serif; height: 14px; }

.tabline { height: 27px; display: flex; align-items: flex-start; }
.filetab { margin-left: 24px; width: 76px; font-size: 15.5px; line-height: 22px; white-space: nowrap; }
.rtab { width: 64px; height: 25px; text-align: center; font-size: 16px; line-height: 22px; }
.rtab.active { color: #ffc93c; border-bottom: 3px solid #ffc33a; }
.search { margin-left: auto; margin-top: -2px; width: 219px; height: 26px; background: #fff; border: 2px solid #7d7d7d; display: flex; align-items: center; color: #aaa; font-size: 14px; line-height: 22px; }
.search span { flex: 1; }
.mag { width: 16px; height: 16px; margin-right: 2px; }
.hbtn { width: 16px; height: 16px; margin-left: 10px; margin-top: 3px; }
.hq { width: 16px; height: 16px; margin: 3px 0 0 10px; border: 1px solid #fff; border-radius: 50%; font: 12px/14px "Liberation Sans", sans-serif; text-align: center; }
.hex { width: 10px; margin: 0 6px 0 12px; font: 18px/22px "Liberation Sans", sans-serif; text-align: center; }
.search + .hbtn { margin-left: 11px; }

/* app body */
.app { margin-left: 4px; height: 1112px; background: #fff; display: flex; flex-direction: column; }

.ribbon { height: 107px; display: flex; border-bottom: 2px solid #ddd; position: relative; padding-top: 5px; flex: none; }
.group { height: 98px; border-right: 1px solid #d8d8d8; display: flex; flex-direction: column; flex: none; }
.g1 { width: 121px; padding-left: 11px; } .g2 { width: 640px; padding-left: 8px; } .g3 { width: 302px; padding-left: 9px; }
.g4 { width: 115px; padding-left: 5px; } .g5 { width: 346px; padding-left: 7px; } .g6 { width: 55px; }
.gbody { height: 82px; display: flex; }
.gfoot { height: 16px; display: flex; align-items: center; margin-left: -11px; position: relative; }
.g2 .gfoot { margin-left: -8px; } .g3 .gfoot { margin-left: -9px; } .g4 .gfoot { margin-left: -5px; } .g5 .gfoot { margin-left: -7px; } .g6 .gfoot { margin-left: 0; }
.gfoot span { flex: 1; text-align: center; color: #1a7aa6; font-size: 14px; line-height: 20px; margin-top: 3px; }
.gfoot .tri { margin-right: 9px; margin-left: 5px; }
.ribbon-end { position: absolute; right: 2px; top: 94px; }

.item { display: flex; flex-direction: column; align-items: center; flex: none; }
.item > span { font-size: 14px; line-height: 20px; margin-top: 4px; white-space: nowrap; color: #333; }
.item > span.up { margin-top: 3px; }
.item > .tri { margin-top: 5px; }
.ic { width: 34px; height: 34px; flex: none; }
.w34 { width: 34px; } .w40 { width: 40px; } .w42 { width: 42px; } .w44 { width: 44px; } .w46 { width: 46px; } .w47 { width: 47px; }
.w50 { width: 50px; } .w55 { width: 56px; } .w56 { width: 56px; } .w60 { width: 60px; } .w62 { width: 62px; } .w68 { width: 68px; } .w94 { width: 94px; }
.gap7 { margin-left: 7px; }
.stack { flex: none; display: flex; flex-direction: column; padding-left: 3px; }
.s98 { width: 98px; } .s129 { width: 129px; padding-left: 5px; }
.srow { height: 38px; display: flex; align-items: center; gap: 3px; white-space: nowrap; line-height: 20px; font-size: 14px; }
.s129 .srow { gap: 4px; }
.ics { width: 26px; height: 26px; }

/* toolbar */
.toolbar { height: 32px; display: flex; align-items: center; padding: 3px 0 0 13px; border-bottom: 2px solid #b4b4b4; flex: none; position: relative; }
.burger { width: 10px; height: 10px; margin-right: 7px; }
.menutxt { width: 52px; font-size: 14px; white-space: nowrap; line-height: 20px; }
.arrow-menu { margin-left: 5px; }
.tsep { width: 1px; height: 24px; background: #d8d8d8; flex: none; }
.sep-a { margin-left: 9px; } .sep-b { margin-left: 11px; } .sep-c { margin-left: 13px; }
.combo { height: 26px; border: 1px solid #888; display: flex; align-items: center; justify-content: space-between; padding: 0 6px 0 2px; font-size: 14px; line-height: 20px; margin-left: 10px; }
.tri-l { border-left-width: 5px; border-right-width: 5px; border-top-width: 6px; }
.c1 { width: 183px; }
.c2 { width: 192px; margin-left: 0; }
.fslot { width: 33px; display: flex; justify-content: center; }
.fic { width: 20px; height: 20px; }
.tbi { width: 20px; height: 20px; margin-left: 5px; }
.tbi.first { margin-left: 10px; }
.tbi.near { margin-left: 8px; }
.tbi.far { margin-left: 10px; }
.tba { margin-left: 6px; }
.toolbar-end { position: absolute; right: 2px; top: 15px; }

/* work */
.work { flex: 1; min-height: 0; display: flex; position: relative; }
.viewport { width: 1370px; display: flex; flex-direction: column; flex: none; }
.doc-tabs { height: 31px; display: flex; border-bottom: 2px solid #005f85; flex: none; padding-top: 1px; }
.dtab { width: 108px; display: flex; align-items: center; padding-left: 5px; font-size: 15px; line-height: 20px; white-space: nowrap; color: #333; }
.dic { width: 16px; height: 16px; margin-right: 5px; flex: none; }
.dtab.on { width: 120px; background: #005f85; color: #fff; padding-left: 7px; margin-bottom: -2px; }
.dtab.on .dic { margin-right: 4px; }
.dmini { width: 10px; height: 12px; margin-left: 7px; }
.dx { margin-left: 5px; font: 12px/14px "DejaVu Sans", sans-serif; }
.canvas { flex: 1; min-height: 0; border-right: 1px solid #ddd; overflow: hidden; }
.model { width: 1369px; height: 942px; }

.vtools { width: 43px; flex: none; display: flex; flex-direction: column; align-items: center; gap: 6px; padding: 13px 2px 0 0; }
.vline { display: block; width: 36px; height: 2px; background: #e0e0e0; margin-top: 1px; flex: none; }

.navpanel { width: 374px; flex: none; border-left: 2px solid #ababab; display: flex; flex-direction: column; min-height: 0; }
.navtitle { height: 31px; display: flex; align-items: center; padding: 2px 0 0 13px; font-size: 15px; line-height: 20px; flex: none; }
.nbox { width: 14px; height: 13px; border: 1.5px solid #333; margin-right: 11px; }
.table { margin-left: 9px; width: 357px; flex: 1; min-height: 0; border: 1px solid #ddd; border-bottom: 0; padding: 1px 1px 0 1px; overflow: hidden; }
.thead { height: 24px; display: grid; grid-template-columns: 249px 30px 30px 45px; background: #f0f0f0; border-bottom: 1px solid #ddd; }
.th { border-right: 1px solid #ddd; font-size: 15px; line-height: 24px; text-align: center; white-space: nowrap; overflow: hidden; }
.th:last-child { border-right: 0; }
.th-name { display: flex; align-items: center; padding: 1px 0 0 6px; text-align: left; }
.tri-up { width: 0; height: 0; border-left: 6px solid transparent; border-right: 6px solid transparent; border-bottom: 6px solid #111; margin-left: 18px; }

.row { height: 24px; display: grid; grid-template-columns: 249px 30px 30px 45px; border-bottom: 1px solid #e8e8e8; position: relative; background: #fff; }
.row:nth-child(even) { background: #f9f9f9; }
.c0 { display: flex; align-items: center; border-right: 1px solid #e8e8e8; font-size: 15px; line-height: 20px; white-space: nowrap; min-width: 0; padding-top: 1px; }
.c { border-right: 1px solid #e8e8e8; display: flex; align-items: center; justify-content: center; padding-top: 1px; }
.c:last-child { border-right: 0; }
.c.ok .t { margin-right: 4px; }
.root .c0 { padding-left: 4px; }
.kid .c0 { padding-left: 37px; }
.t { width: 16px; height: 16px; flex: none; }
.tt { width: 8px; height: 14px; margin-right: 6px; }
.lbl { margin-left: 3px; }
.off .lbl { color: #a4a4a4; }
.strong { font-weight: 700; }
.tg { width: 9px; height: 9px; margin-right: 5px; flex: none; position: relative; }
.plus, .minus { border: 1px solid #777; background: #fff; z-index: 1; }
.plus::before, .minus::before { content: ""; position: absolute; left: 1px; top: 3px; width: 5px; height: 1px; background: #111; }
.plus::after { content: ""; position: absolute; left: 3px; top: 1px; width: 1px; height: 5px; background: #111; }
.root::before { content: ""; position: absolute; left: 8px; top: 0; bottom: 0; border-left: 1px dotted #888; }
.root:first-child::before { top: 12px; }
.root:nth-child(4)::before { bottom: 12px; }
.root::after { content: ""; position: absolute; left: 9px; width: 8px; top: 12px; border-top: 1px dotted #888; }
.kid::before { content: ""; position: absolute; left: 28px; top: 0; bottom: 0; border-left: 1px dotted #888; }
.kid.last::before { bottom: 12px; }
.kid::after { content: ""; position: absolute; left: 28px; width: 8px; top: 12px; border-top: 1px dotted #888; }

.rail { flex: 1; background: #d9d9d9; border-left: 2px solid #ababab; display: flex; flex-direction: column; align-items: stretch; min-width: 0; }
.rail-top { height: 82px; display: flex; flex-direction: column; align-items: center; padding-top: 6px; border-bottom: 1px solid #bbb; }
.gear { width: 16px; height: 16px; }
.ri { width: 26px; height: 26px; flex: none; }
.rail-top .ri { margin-top: 28px; }
.rail-active { height: 46px; background: #fff; margin-left: -2px; padding-left: 2px; display: flex; justify-content: center; align-items: center; border-bottom: 1px solid #bbb; }
.rail-rest { display: flex; flex-direction: column; align-items: center; padding-top: 8px; }
.rail-rest .ri:nth-child(2) { margin-top: 27px; }
.rail-rest .ri:nth-child(3) { margin-top: 28px; }
.rail-rest .ri:nth-child(4) { margin-top: 17px; }

.watermark { position: absolute; right: 2px; bottom: -2px; color: #666; font-size: 15.5px; line-height: 22px; white-space: nowrap; letter-spacing: .7px; }
.wm-l { font: 13.3px/22px "Liberation Mono", monospace; letter-spacing: 0; }
```
